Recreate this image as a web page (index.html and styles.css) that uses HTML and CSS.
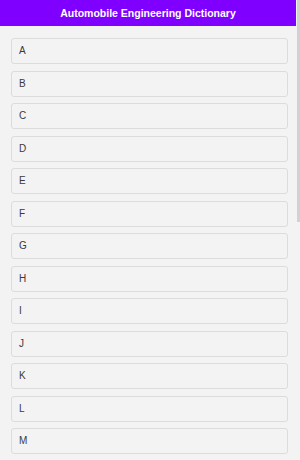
FILE: index.html
```
<!DOCTYPE html>
<html>
<head>
 <link rel="stylesheet" href="styles.css">
</head>
<body>
  <div class="page">
    <div class="header">Automobile Engineering Dictionary</div>
    <div class="list">
      <div class="item">A</div>
      <div class="item">B</div>
      <div class="item">C</div>
      <div class="item">D</div>
      <div class="item">E</div>
      <div class="item">F</div>
      <div class="item">G</div>
      <div class="item">H</div>
      <div class="item">I</div>
      <div class="item">J</div>
      <div class="item">K</div>
      <div class="item">L</div>
      <div class="item">M</div>
      <div class="item">N</div>
      <div class="item">O</div>
      <div class="item">P</div>
      <div class="item">Q</div>
      <div class="item">R</div>
      <div class="item">S</div>
      <div class="item">T</div>
      <div class="item">U</div>
      <div class="item">V</div>
      <div class="item">W</div>
      <div class="item">X</div>
      <div class="item">Y</div>
      <div class="item">Z</div>
    </div>
  </div>
</body>
</html>
```

FILE: styles.css
```
body {
  margin: 0;
  font-family: "Liberation Sans", Arial, sans-serif;
  /* thin scrollbar thumb on the right edge */
  background: linear-gradient(#d2d2d2, #d2d2d2) right 0 top 0 / 3px 222px no-repeat, #f3f3f3;
}

.page {
  width: calc(100% - 4px);
  height: 100vh;
  overflow-y: auto;
}

.header {
  height: 26px;
  line-height: 26px;
  background-color: #7f00ff;
  color: white;
  font-size: 10.5px;
  font-weight: bold;
  text-align: center;
}

.list {
  display: flex;
  flex-direction: column;
  gap: 6.5px;
  padding: 12px 8px 12px 11px;
}

.item {
  height: 26px;
  box-sizing: border-box;
  line-height: 24px;
  padding-left: 7px;
  font-size: 10px;
  color: #3a3a3a;
  background-color: #f3f3f3;
  border: 1px solid #dcdcdc;
  border-radius: 3px;
}
```
